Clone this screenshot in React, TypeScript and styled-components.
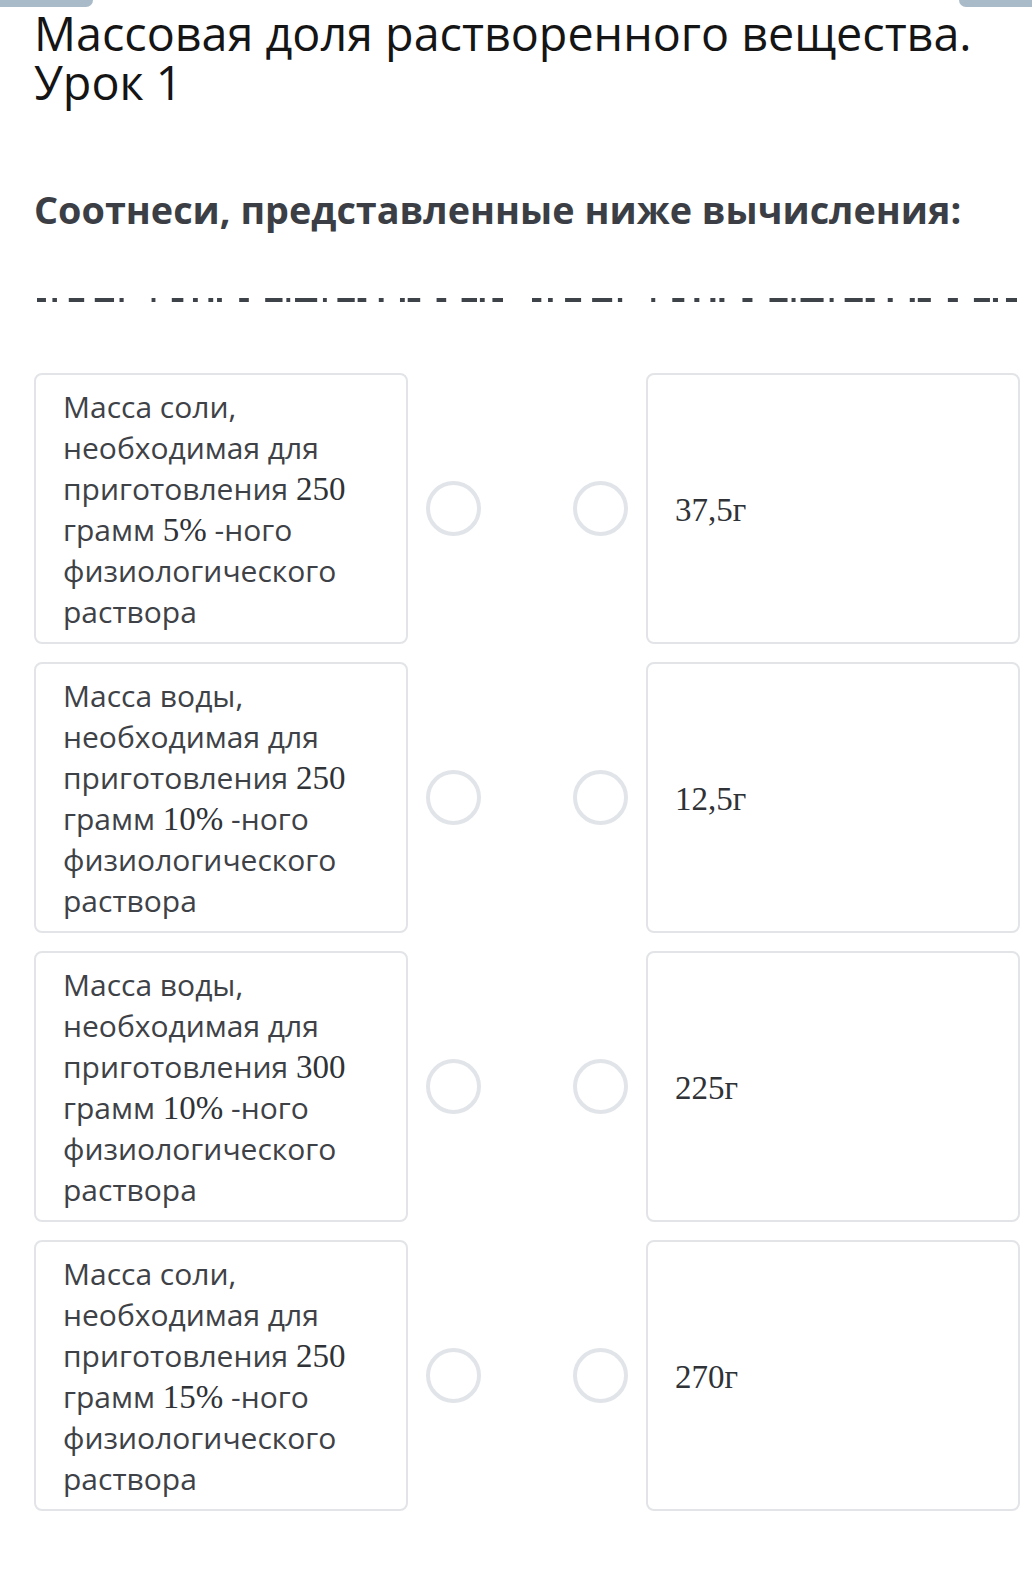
import React from "react";
import styled, { createGlobalStyle } from "styled-components";

const GlobalStyle = createGlobalStyle`
  html, body {
    margin: 0;
    padding: 0;
    background: #ffffff;
  }
  body {
    font-family: "Open Sans", "Noto Sans", "Liberation Sans", sans-serif;
    color: #3c4045;
  }
  * { box-sizing: border-box; }
`;

const TopBars = styled.div`
  display: flex;
  justify-content: space-between;
  height: 7px;
`;

const Tab = styled.div<{ $side: "left" | "right"; $w: number }>`
  width: ${(p) => p.$w}px;
  height: 7px;
  background: #a9bac8;
  border-radius: ${(p) => (p.$side === "left" ? "0 0 12px 0" : "0 0 0 12px")};
`;

const Page = styled.main`
  padding: 0 12px 60px 34px;
`;

const Title = styled.h1`
  margin: 2px 0 0;
  font-family: "Open Sans", "Noto Sans", sans-serif;
  font-weight: 400;
  font-size: 46.7px;
  line-height: 49px;
  color: #151515;
`;

const Subtitle = styled.h2`
  margin: 79px 0 0;
  font-family: "Open Sans", "Noto Sans", sans-serif;
  font-weight: 700;
  font-size: 37.8px;
  line-height: 48px;
  color: #3b3f45;
`;

const Divider = styled.div`
  display: flex;
  gap: 29px;
  margin: 64px 0 0 3px;
  height: 4px;
`;

const DashSvg = styled.svg`
  display: block;
  height: 4px;
`;

const Matches = styled.div`
  display: grid;
  grid-template-columns: 374px 1fr 374px;
  row-gap: 18px;
  margin-top: 71px;
`;

const Card = styled.div`
  height: 271px;
  border: 2px solid #e2e4e7;
  border-radius: 8px;
  background: #fff;
  display: flex;
  align-items: center;
  padding: 0 26px 0 27px;
`;

const CardText = styled.div`
  font-family: "Open Sans", "Noto Sans", sans-serif;
  font-size: 30px;
  line-height: 41px;
  color: #3e4247;
  margin-top: 1px;
`;

const Num = styled.span`
  font-family: "Liberation Serif", "DejaVu Serif", serif;
  font-size: 33px;
  line-height: 1;
  color: #2f3236;
`;

const Answer = styled.div`
  font-family: "Liberation Serif", "DejaVu Serif", serif;
  font-size: 33px;
  line-height: 40px;
  color: #2f3236;
  margin-top: 2px;
`;

const Connectors = styled.div`
  display: flex;
  align-items: center;
  justify-content: center;
  gap: 92px;
`;

const Dot = styled.span`
  width: 55px;
  height: 55px;
  border-radius: 50%;
  border: 4px solid #e1e4e8;
  background: #fff;
`;

const dashes: [number, number][] = [
  [0, 9.3], [16, 20.7], [33, 49], [60, 80], [85.7, 90], [119, 123], [140, 152],
  [162, 167], [178, 183], [187, 192], [210, 220], [237, 255], [259, 263],
  [268, 291], [297, 301], [312, 330], [333, 342], [355, 360], [377, 382],
  [385, 398], [415, 425], [441, 457], [460, 465], [473, 484],
];

const DashSegment = ({ width }: { width: number }) => (
  <DashSvg width={width} viewBox="0 0 484 4" preserveAspectRatio="none">
    {dashes.map(([a, b], i) => (
      <rect key={i} x={a} y={0} width={b - a} height={4} fill="#3e434a" />
    ))}
  </DashSvg>
);

type Q = { pre: string; n1: string; mid: string; n2: string; post: string };

const questions: Q[] = [
  { pre: "Масса соли, необходимая для приготовления ", n1: "250", mid: " грамм ", n2: "5%", post: " -ного физиологического раствора" },
  { pre: "Масса воды, необходимая для приготовления ", n1: "250", mid: " грамм ", n2: "10%", post: " -ного физиологического раствора" },
  { pre: "Масса воды, необходимая для приготовления ", n1: "300", mid: " грамм ", n2: "10%", post: " -ного физиологического раствора" },
  { pre: "Масса соли, необходимая для приготовления ", n1: "250", mid: " грамм ", n2: "15%", post: " -ного физиологического раствора" },
];

const answers = ["37,5г", "12,5г", "225г", "270г"];

export default function App() {
  return (
    <>
      <GlobalStyle />
      <TopBars>
        <Tab $side="left" $w={93} />
        <Tab $side="right" $w={73} />
      </TopBars>
      <Page>
        <Title>
          Массовая доля растворенного вещества.
          <br />
          Урок 1
        </Title>
        <Subtitle>Соотнеси, представленные ниже вычисления:</Subtitle>
        <Divider>
          <DashSegment width={466} />
          <DashSegment width={485} />
        </Divider>
        <Matches>
          {questions.map((q, i) => (
            <React.Fragment key={i}>
              <Card>
                <CardText>
                  {q.pre}
                  <Num>{q.n1}</Num>
                  {q.mid}
                  <Num>{q.n2}</Num>
                  {q.post}
                </CardText>
              </Card>
              <Connectors>
                <Dot />
                <Dot />
              </Connectors>
              <Card>
                <Answer>{answers[i]}</Answer>
              </Card>
            </React.Fragment>
          ))}
        </Matches>
      </Page>
    </>
  );
}
